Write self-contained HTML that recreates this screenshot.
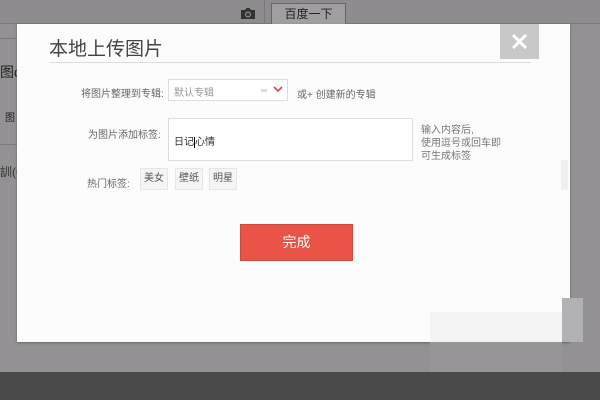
<!DOCTYPE html>
<html><head><meta charset="utf-8"><style>
*{margin:0;padding:0;box-sizing:border-box}
body{width:600px;height:400px;overflow:hidden;background:#939194;position:relative;font-family:"Liberation Sans","Noto Sans CJK SC",sans-serif}
.a{position:absolute}
.t{font-size:10px;color:#666}
</style></head><body>
<div class="a" style="left:0;top:0;width:600px;height:24px;background:#8e8c8f;border-bottom:1px solid #7a787b"></div>
<div class="a" style="left:0;top:0;width:265px;height:24px;border-right:1px solid #7a787b"></div>
<svg class="a" style="left:240px;top:7px" width="16" height="13" viewBox="0 0 16 13"><path d="M1 3h4l1.5-2h3L11 3h4v9H1z" fill="#333"/><circle cx="8" cy="7.5" r="3" fill="#8e8c8f"/><circle cx="8" cy="7.5" r="1.8" fill="#333"/></svg>
<div class="a" style="left:271px;top:3px;width:75px;height:22px;background:#a09ea1;border:1px solid #666;font-size:12px;color:#222;text-align:center;line-height:20px;font-family:'Noto Sans CJK SC',sans-serif">百度一下</div>
<div class="a" style="left:0;top:38px;width:17px;height:1px;background:#7a787b"></div>
<div class="a" style="left:0;top:62px;font-size:14px;color:#222">图d</div>
<div class="a" style="left:5px;top:109px;font-size:10px;color:#222">图</div>
<div class="a" style="left:0;top:144px;width:17px;height:1px;background:#7a787b"></div>
<div class="a" style="left:0;top:163px;font-size:12px;color:#333">訓(0</div>
<div class="a" style="left:0;top:372px;width:600px;height:28px;background:#4a4a4a"></div>

<div class="a" style="left:17px;top:24px;width:553px;height:318px;background:#fdfcfd;box-shadow:0 1px 2px #666"></div>
<div class="a" style="left:49px;top:34px;font-size:19px;color:#444">本地上传图片</div>
<div class="a" style="left:49px;top:62px;width:482px;height:1px;background:#ddd"></div>
<div class="a" style="left:500px;top:24px;width:39px;height:35px;background:#c8c8c8"></div>
<svg class="a" style="left:511px;top:33px" width="17" height="17"><path d="M2 2L15 15M15 2L2 15" stroke="#fff" stroke-width="3"/></svg>
<div class="a t" style="left:81px;top:85px">将图片整理到专辑:</div>
<div class="a" style="left:168px;top:79px;width:120px;height:22px;border:1px solid #ddd;background:#fff"></div>
<div class="a t" style="left:174px;top:84px;color:#999">默认专辑</div>
<div class="a" style="left:261px;top:89px;width:6px;height:3px;background:#ddd"></div>
<svg class="a" style="left:273px;top:86px" width="10" height="7"><path d="M1 1L5 5L9 1" stroke="#d44" stroke-width="1.6" fill="none"/></svg>
<div class="a t" style="left:297px;top:86px">或+ 创建新的专辑</div>
<div class="a t" style="left:88px;top:126px">为图片添加标签:</div>
<div class="a" style="left:168px;top:118px;width:245px;height:43px;border:1px solid #ddd;background:#fff"></div>
<div class="a" style="left:174px;top:133px;font-size:10px;color:#333">日记<span style="border-left:1px solid #000"></span>心情</div>
<div class="a t" style="left:421px;top:124px;line-height:13px;color:#777">输入内容后,<br>使用逗号或回车即<br>可生成标签</div>
<div class="a t" style="left:87px;top:175px">热门标签:</div>
<div class="a t" style="left:140px;top:168px;width:28px;height:22px;border:1px solid #e6e6e6;background:#f6f5f6;text-align:center;line-height:20px;color:#555">美女</div>
<div class="a t" style="left:175px;top:168px;width:28px;height:22px;border:1px solid #e6e6e6;background:#f6f5f6;text-align:center;line-height:20px;color:#555">壁纸</div>
<div class="a t" style="left:209px;top:168px;width:28px;height:22px;border:1px solid #e6e6e6;background:#f6f5f6;text-align:center;line-height:20px;color:#555">明星</div>
<div class="a" style="left:240px;top:224px;width:113px;height:37px;background:#ea5447;border:1px solid #c94a3e;color:#fff;font-size:14px;text-align:center;line-height:35px">完成</div>
<div class="a" style="left:561px;top:160px;width:7px;height:30px;background:#f0eff0"></div>

<div class="a" style="left:430px;top:312px;width:132px;height:30px;background:#f3f3f3"></div>
<div class="a" style="left:430px;top:342px;width:132px;height:30px;background:#979598"></div>
<div class="a" style="left:562px;top:298px;width:21px;height:44px;background:#b2b1b3"></div>
</body></html>
